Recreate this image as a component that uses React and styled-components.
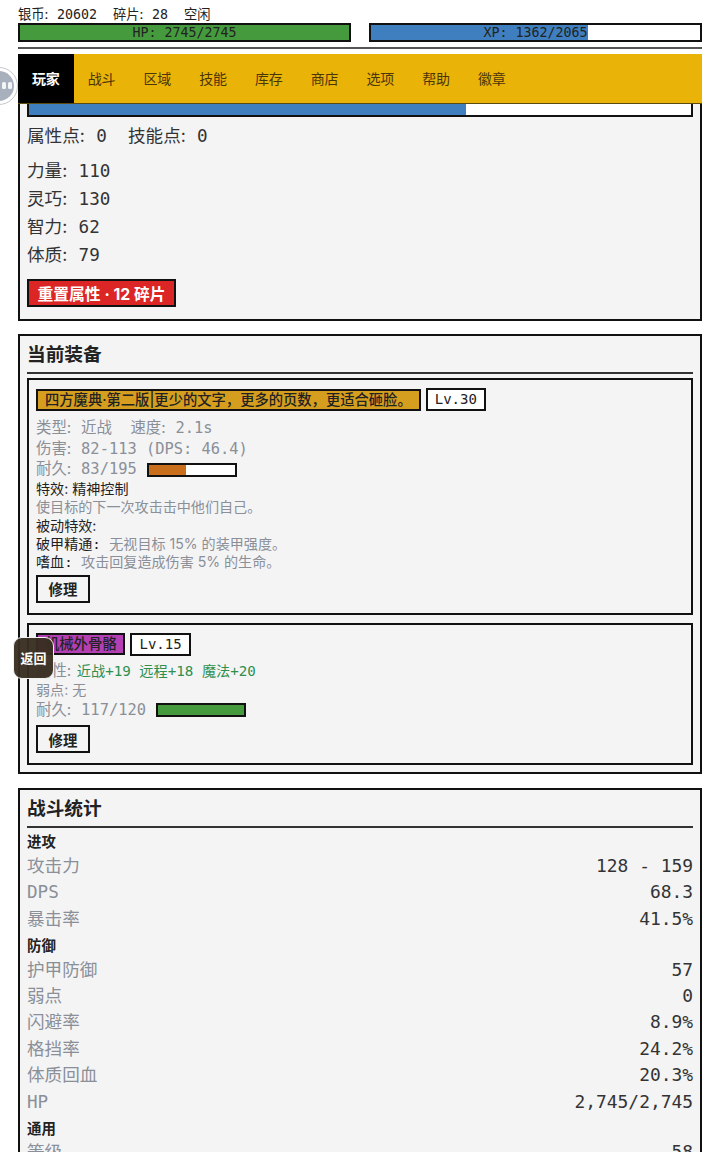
import React from 'react';
import styled, { createGlobalStyle } from 'styled-components';

const mono = `"DejaVu Sans Mono", "Noto Sans CJK SC", monospace`;
const sans = `"Inter", "Noto Sans CJK SC", sans-serif`;

const GlobalStyle = createGlobalStyle`
    html, body {
        margin: 0;
        padding: 0;
        background: #fff;
        overflow: hidden;
    }
    body {
        height: 1152px;
        font-family: ${mono};
        color: #111;
    }
`;

const Page = styled.div`
    position: relative;
    height: 1152px;
    overflow: hidden;
    padding: 0 18px;
    box-sizing: border-box;
`;
const StatusLine = styled.div`
    height: 23px;
    padding-top: 5px;
    box-sizing: border-box;
    font-size: 13.3px;
    line-height: 18px;
    white-space: pre;
    color: #222;
`;
const Label = styled.span`
    font-family: ${sans};
    font-weight: 400;
    padding-right: 0.04em;
`;
const Bars = styled.div`
    display: grid;
    grid-template-columns: 1fr 1fr;
    gap: 18px;
`;
const Bar = styled.div`
    position: relative;
    height: 19px;
    border: 2px solid #111;
    box-sizing: border-box;
    background: #fff;
`;
const BarFill = styled.div`
    height: 100%;
    background: ${props => props.color};
`;
const BarLabel = styled.div`
    position: absolute;
    inset: 0;
    text-align: center;
    font-size: 13.3px;
    line-height: 15px;
    color: #222;
`;
const Rule = styled.div`
    height: 2px;
    margin-top: 5px;
    background: #555;
`;
const Nav = styled.nav`
    position: relative;
    z-index: 5;
    display: flex;
    height: 50px;
    margin-top: 5px;
    background: #eab308;
    border-bottom: 1px solid #5c4a12;
    box-sizing: border-box;
`;
const Tab = styled.div`
    width: 55.75px;
    text-align: center;
    font-family: ${sans};
    font-size: 14px;
    line-height: 49px;
    font-weight: ${props => props.active ? 700 : 400};
    color: ${props => props.active ? '#fff' : '#4a3608'};
    background: ${props => props.active ? '#000' : 'transparent'};
`;
const Panel = styled.section`
    border: 2px solid #111;
    background: #f4f4f5;
    padding: 7px;
    margin-bottom: 14px;
`;
const AttrPanel = styled(Panel)`
    margin-top: -30px;
    margin-bottom: 13px;
    padding-bottom: 12px;
`;
const ExpBar = styled.div`
    height: 30px;
    border: 2px solid #111;
    background: #fff;
    margin-bottom: 4px;
`;
const ExpFill = styled.div`
    height: 100%;
    background: #3f7fbf;
`;
const StatRow = styled.div`
    font-size: 17.6px;
    line-height: 28px;
    color: #333;
    white-space: pre;
`;
const Points = styled(StatRow)`
    margin-bottom: 6px;
    line-height: 29px;
`;
const ResetButton = styled.button`
    display: block;
    margin-top: 10px;
    height: 28px;
    width: 149px;
    padding: 0;
    border: 2px solid #111;
    background: #dc2626;
    color: #fff;
    font-family: ${sans};
    font-size: 15.8px;
    font-weight: 700;
`;
const PanelTitle = styled.h2`
    margin: 0 0 4px;
    padding-bottom: 5px;
    font-family: ${sans};
    font-size: 18.7px;
    line-height: 24px;
    font-weight: 700;
    color: #222;
    border-bottom: 2px solid #333;
`;
const ItemCard = styled.div`
    border: 2px solid #111;
    padding: 8px 7px 10px;
    & + & {
        margin-top: 8px;
    }
`;
const ItemHead = styled.div`
    display: flex;
    align-items: center;
    gap: 5px;
    margin-bottom: ${props => props.tight ? '5px' : '7px'};
`;
const ItemName = styled.div`
    height: 22px;
    padding: 0 7px;
    border: 2px solid #111;
    box-sizing: border-box;
    background: ${props => props.color};
    font-family: ${sans};
    font-size: 14.3px;
    line-height: 18px;
    font-weight: 500;
    color: #222;
    white-space: nowrap;
`;
const ItemLevel = styled.div`
    height: 23px;
    padding: 0 7px;
    border: 2px solid #111;
    box-sizing: border-box;
    background: #fff;
    font-size: 14px;
    line-height: 19px;
    color: #222;
`;
const InfoRow = styled.div`
    display: flex;
    align-items: center;
    font-size: 15.4px;
    line-height: 20.7px;
    color: #8a8f98;
    white-space: pre;
`;
const Durability = styled.div`
    width: 90px;
    height: 14px;
    margin-left: 10px;
    border: 2px solid #111;
    box-sizing: border-box;
    background: #fff;
`;
const DurabilityFill = styled.div`
    height: 100%;
    background: ${props => props.color};
`;
const EffectRow = styled.div`
    font-family: ${sans};
    font-size: 14.08px;
    line-height: 18.3px;
    color: ${props => props.muted ? '#8a8f98' : '#222'};
    white-space: pre;
`;
const PassiveName = styled.span`
    font-family: ${mono};
`;
const Muted = styled.span`
    color: #8a8f98;
`;
const Bonus = styled.span`
    margin-left: 5px;
    font-size: 14.2px;
    color: #2f8f4f;
`;
const RepairButton = styled.button`
    display: block;
    width: 54px;
    height: 28px;
    margin-top: ${props => props.loose ? '5px' : '3px'};
    padding: 0;
    border: 2px solid #111;
    background: #f4f4f5;
    color: #222;
    font-family: ${sans};
    font-size: 14.4px;
    font-weight: 700;
`;
const GroupTitle = styled.div`
    font-family: ${sans};
    font-size: 14.4px;
    line-height: 20.5px;
    font-weight: 700;
    color: #222;
    margin-top: ${props => props.first ? '0' : '4px'};
`;
const CombatRow = styled.div`
    display: flex;
    justify-content: space-between;
    font-size: 17.6px;
    line-height: 26.4px;
`;
const CombatLabel = styled.span`
    color: #8a8f98;
`;
const CombatValue = styled.span`
    font-size: 17.9px;
    color: #333;
`;
const FloatBall = styled.div`
    position: absolute;
    z-index: 10;
    left: -20px;
    top: 67px;
    width: 38px;
    height: 38px;
    border-radius: 50%;
    border: 1px solid #c4c8ce;
    background: #fff;
    box-sizing: border-box;
    display: flex;
    align-items: center;
    justify-content: center;
`;
const BallFace = styled.div`
    width: 30px;
    height: 30px;
    border-radius: 50%;
    background: #a9b0bd;
    box-sizing: border-box;
    padding-right: 1px;
    display: flex;
    align-items: center;
    justify-content: flex-end;
`;
const BackDock = styled.div`
    position: absolute;
    z-index: 10;
    left: 0;
    top: 635px;
    width: 18px;
    height: 45px;
    background: rgba(255, 255, 255, 0.8);
`;
const BackButton = styled.div`
    position: absolute;
    z-index: 11;
    left: 13px;
    top: 637px;
    width: 41px;
    height: 42px;
    border: 1px solid #f2f2f2;
    border-radius: 9px;
    box-sizing: border-box;
    background: rgba(56, 47, 33, 0.96);
    color: #fff;
    font-family: ${sans};
    font-size: 13px;
    font-weight: 700;
    line-height: 40px;
    text-align: center;
`;

const attack = [['攻击力', '128 - 159'], ['DPS', '68.3'], ['暴击率', '41.5%']];
const defence = [
    ['护甲防御', '57'], ['弱点', '0'], ['闪避率', '8.9%'],
    ['格挡率', '24.2%'], ['体质回血', '20.3%'], ['HP', '2,745/2,745'],
];

const CombatRows = ({ rows }) => rows.map(([label, value]) => (
    <CombatRow key={label}>
        <CombatLabel>{label}</CombatLabel>
        <CombatValue>{value}</CombatValue>
    </CombatRow>
));

const App = () => (
    <Page>
        <GlobalStyle />
        <StatusLine><Label>银币:</Label> 20602  <Label>碎片:</Label> 28  空闲</StatusLine>
        <Bars>
            <Bar>
                <BarFill color="#459a3e" style={{ width: '100%' }} />
                <BarLabel>HP: 2745/2745</BarLabel>
            </Bar>
            <Bar>
                <BarFill color="#3f7fbf" style={{ width: '66%' }} />
                <BarLabel>XP: 1362/2065</BarLabel>
            </Bar>
        </Bars>
        <Rule />
        <Nav>
            {['玩家', '战斗', '区域', '技能', '库存', '商店', '选项', '帮助', '徽章'].map((t, i) => (
                <Tab key={t} active={i === 0}>{t}</Tab>
            ))}
        </Nav>
        <AttrPanel>
            <ExpBar><ExpFill style={{ width: '66%' }} /></ExpBar>
            <Points><Label>属性点:</Label> 0  <Label>技能点:</Label> 0</Points>
            <StatRow><Label>力量:</Label> 110</StatRow>
            <StatRow><Label>灵巧:</Label> 130</StatRow>
            <StatRow><Label>智力:</Label> 62</StatRow>
            <StatRow><Label>体质:</Label> 79</StatRow>
            <ResetButton>重置属性 · 12 碎片</ResetButton>
        </AttrPanel>
        <Panel>
            <PanelTitle>当前装备</PanelTitle>
            <ItemCard>
                <ItemHead>
                    <ItemName color="#d69e1e">四方魔典·第二版|更少的文字，更多的页数，更适合砸脸。</ItemName>
                    <ItemLevel>Lv.30</ItemLevel>
                </ItemHead>
                <InfoRow><Label>类型:</Label> 近战  <Label>速度:</Label> 2.1s</InfoRow>
                <InfoRow><Label>伤害:</Label> 82-113 (DPS: 46.4)</InfoRow>
                <InfoRow><Label>耐久:</Label> 83/195<Durability><DurabilityFill color="#c96f1b" style={{ width: '43%' }} /></Durability></InfoRow>
                <EffectRow>特效: 精神控制</EffectRow>
                <EffectRow muted>使目标的下一次攻击击中他们自己。</EffectRow>
                <EffectRow>被动特效:</EffectRow>
                <EffectRow><PassiveName>破甲精通: </PassiveName><Muted>无视目标 15% 的装甲强度。</Muted></EffectRow>
                <EffectRow><PassiveName>嗜血: </PassiveName><Muted>攻击回复造成伤害 5% 的生命。</Muted></EffectRow>
                <RepairButton>修理</RepairButton>
            </ItemCard>
            <ItemCard>
                <ItemHead tight>
                    <ItemName color="#b43fb4">机械外骨骼</ItemName>
                    <ItemLevel>Lv.15</ItemLevel>
                </ItemHead>
                <InfoRow><Label>属性:</Label><Bonus>近战+19 远程+18 魔法+20</Bonus></InfoRow>
                <EffectRow muted>弱点: 无</EffectRow>
                <InfoRow><Label>耐久:</Label> 117/120<Durability><DurabilityFill color="#459a3e" style={{ width: '100%' }} /></Durability></InfoRow>
                <RepairButton loose>修理</RepairButton>
            </ItemCard>
        </Panel>
        <Panel>
            <PanelTitle>战斗统计</PanelTitle>
            <GroupTitle first>进攻</GroupTitle>
            <CombatRows rows={attack} />
            <GroupTitle>防御</GroupTitle>
            <CombatRows rows={defence} />
            <GroupTitle>通用</GroupTitle>
            <CombatRows rows={[['等级', '58']]} />
        </Panel>
        <FloatBall>
            <BallFace>
                <svg width="11" height="8" viewBox="0 0 11 8">
                    <rect x="0" y="0" width="4" height="7" rx="1.5" fill="#f4f5f7" />
                    <rect x="6" y="0" width="4" height="7" rx="1.5" fill="#f4f5f7" />
                </svg>
            </BallFace>
        </FloatBall>
        <BackDock />
        <BackButton>返回</BackButton>
    </Page>
);

export default App;
